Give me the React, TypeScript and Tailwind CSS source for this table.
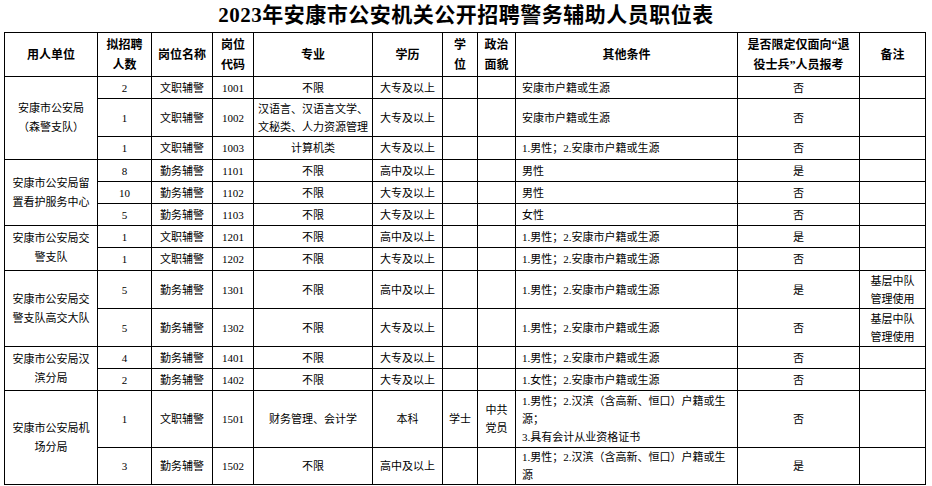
import React from 'react';

type Row = {
  num: string;
  name: string;
  code: string;
  major: React.ReactNode;
  edu: string;
  degree?: string;
  party?: React.ReactNode;
  other: React.ReactNode;
  vet: string;
  note?: React.ReactNode;
  h: string;
};

type Unit = { unit: React.ReactNode; rows: Row[] };

const male = '1.男性；2.安康市户籍或生源';
const note = (
  <>
    基层中队
    <br />
    管理使用
  </>
);

const units: Unit[] = [
  {
    unit: (
      <>
        安康市公安局
        <br />
        （森警支队）
      </>
    ),
    rows: [
      { num: '2', name: '文职辅警', code: '1001', major: '不限', edu: '大专及以上', other: '安康市户籍或生源', vet: '否', h: 'h-[22px]' },
      {
        num: '1',
        name: '文职辅警',
        code: '1002',
        major: (
          <>
            汉语言、汉语言文学、
            <br />
            文秘类、人力资源管理
          </>
        ),
        edu: '大专及以上',
        other: '安康市户籍或生源',
        vet: '否',
        h: 'h-[38px]',
      },
      { num: '1', name: '文职辅警', code: '1003', major: '计算机类', edu: '大专及以上', other: male, vet: '否', h: 'h-[23px]' },
    ],
  },
  {
    unit: (
      <>
        安康市公安局留
        <br />
        置看护服务中心
      </>
    ),
    rows: [
      { num: '8', name: '勤务辅警', code: '1101', major: '不限', edu: '高中及以上', other: '男性', vet: '是', h: 'h-[22px]' },
      { num: '10', name: '勤务辅警', code: '1102', major: '不限', edu: '大专及以上', other: '男性', vet: '否', h: 'h-[22px]' },
      { num: '5', name: '勤务辅警', code: '1103', major: '不限', edu: '大专及以上', other: '女性', vet: '否', h: 'h-[22px]' },
    ],
  },
  {
    unit: (
      <>
        安康市公安局交
        <br />
        警支队
      </>
    ),
    rows: [
      { num: '1', name: '文职辅警', code: '1201', major: '不限', edu: '高中及以上', other: male, vet: '是', h: 'h-[22px]' },
      { num: '1', name: '文职辅警', code: '1202', major: '不限', edu: '大专及以上', other: male, vet: '否', h: 'h-[23px]' },
    ],
  },
  {
    unit: (
      <>
        安康市公安局交
        <br />
        警支队高交大队
      </>
    ),
    rows: [
      { num: '5', name: '勤务辅警', code: '1301', major: '不限', edu: '高中及以上', other: male, vet: '是', note, h: 'h-[38px]' },
      { num: '5', name: '勤务辅警', code: '1302', major: '不限', edu: '大专及以上', other: male, vet: '否', note, h: 'h-[38px]' },
    ],
  },
  {
    unit: (
      <>
        安康市公安局汉
        <br />
        滨分局
      </>
    ),
    rows: [
      { num: '4', name: '勤务辅警', code: '1401', major: '不限', edu: '大专及以上', other: male, vet: '否', h: 'h-[22px]' },
      { num: '2', name: '勤务辅警', code: '1402', major: '不限', edu: '大专及以上', other: '1.女性；2.安康市户籍或生源', vet: '否', h: 'h-[22px]' },
    ],
  },
  {
    unit: (
      <>
        安康市公安局机
        <br />
        场分局
      </>
    ),
    rows: [
      {
        num: '1',
        name: '文职辅警',
        code: '1501',
        major: '财务管理、会计学',
        edu: '本科',
        degree: '学士',
        party: (
          <>
            中共
            <br />
            党员
          </>
        ),
        other: (
          <>
            1.男性；2.汉滨（含高新、恒口）户籍或生
            <br />
            源；
            <br />
            3.具有会计从业资格证书
          </>
        ),
        vet: '否',
        h: 'h-[57px]',
      },
      {
        num: '3',
        name: '勤务辅警',
        code: '1502',
        major: '不限',
        edu: '高中及以上',
        other: (
          <>
            1.男性；2.汉滨（含高新、恒口）户籍或生
            <br />
            源
          </>
        ),
        vet: '是',
        h: 'h-[37px]',
      },
    ],
  },
];

const th = 'border border-black text-center align-middle font-bold text-[12px] leading-[20px] p-0';
const td = 'border border-black text-center align-middle text-[11px] leading-[18px] p-0 whitespace-nowrap';

export default function App() {
  return (
    <div className="w-[932px] h-[486px] bg-white text-black overflow-hidden font-['Liberation_Serif','Noto_Sans_CJK_SC',serif]">
      <div className="h-[32px] flex items-center justify-center">
        <h1 className="text-[21px] font-bold tracking-[0.5px]">2023年安康市公安机关公开招聘警务辅助人员职位表</h1>
      </div>
      <table className="ml-[4px] w-[921px] table-fixed border-collapse">
        <colgroup>
          <col className="w-[93px]" />
          <col className="w-[54px]" />
          <col className="w-[61px]" />
          <col className="w-[41px]" />
          <col className="w-[119px]" />
          <col className="w-[70px]" />
          <col className="w-[35px]" />
          <col className="w-[38px]" />
          <col className="w-[222px]" />
          <col className="w-[122px]" />
          <col className="w-[66px]" />
        </colgroup>
        <thead>
          <tr className="h-[44px]">
            <th className={th}>用人单位</th>
            <th className={th}>
              拟招聘
              <br />
              人数
            </th>
            <th className={th}>岗位名称</th>
            <th className={th}>
              岗位
              <br />
              代码
            </th>
            <th className={th}>专业</th>
            <th className={th}>学历</th>
            <th className={th}>
              学
              <br />
              位
            </th>
            <th className={th}>
              政治
              <br />
              面貌
            </th>
            <th className={th}>其他条件</th>
            <th className={th}>
              是否限定仅面向“退
              <br />
              役士兵”人员报考
            </th>
            <th className={th}>备注</th>
          </tr>
        </thead>
        <tbody>
          {units.map((u, ui) =>
            u.rows.map((r, ri) => (
              <tr key={`${ui}-${ri}`} className={r.h}>
                {ri === 0 && (
                  <td rowSpan={u.rows.length} className={`${td} leading-[19px]`}>
                    {u.unit}
                  </td>
                )}
                <td className={td}>{r.num}</td>
                <td className={td}>{r.name}</td>
                <td className={td}>{r.code}</td>
                <td className={td}>{r.major}</td>
                <td className={td}>{r.edu}</td>
                <td className={td}>{r.degree}</td>
                <td className={td}>{r.party}</td>
                <td className={`${td} !text-left pl-[6px]`}>{r.other}</td>
                <td className={td}>{r.vet}</td>
                <td className={td}>{r.note}</td>
              </tr>
            ))
          )}
        </tbody>
      </table>
    </div>
  );
}
